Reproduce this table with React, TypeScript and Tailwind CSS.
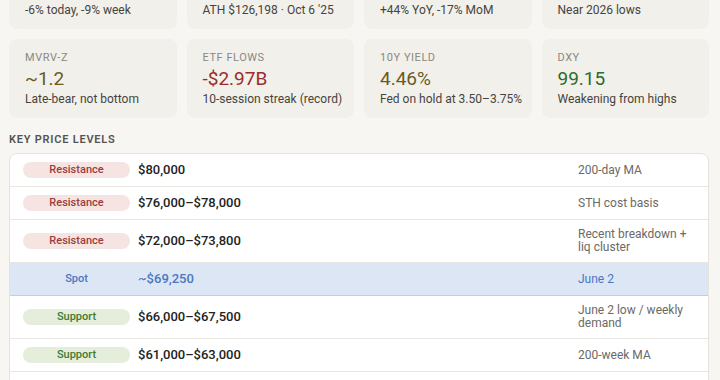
import React from "react";

type Stat = {
  label: string;
  value: string;
  sub: string;
  tone: string;
};

type Level = {
  kind: "Resistance" | "Support" | "Spot";
  price: string;
  note: string;
};

const stats: Stat[] = [
  { label: "BTC PRICE", value: "$69,250", sub: "-6% today, -9% week", tone: "text-[#9b2c2c]" },
  { label: "DRAWDOWN", value: "-45%", sub: "ATH $126,198 · Oct 6 '25", tone: "text-[#9b2c2c]" },
  { label: "STABLECOIN SUPPLY", value: "$251B", sub: "+44% YoY, -17% MoM", tone: "text-[#6b5a1e]" },
  { label: "FEAR & GREED", value: "14", sub: "Near 2026 lows", tone: "text-[#9b2c2c]" },
  { label: "MVRV-Z", value: "~1.2", sub: "Late-bear, not bottom", tone: "text-[#6b5a1e]" },
  { label: "ETF FLOWS", value: "-$2.97B", sub: "10-session streak (record)", tone: "text-[#9b2c2c]" },
  { label: "10Y YIELD", value: "4.46%", sub: "Fed on hold at 3.50–3.75%", tone: "text-[#6b5a1e]" },
  { label: "DXY", value: "99.15", sub: "Weakening from highs", tone: "text-[#2e6b2a]" },
];

const levels: Level[] = [
  { kind: "Resistance", price: "$80,000", note: "200-day MA" },
  { kind: "Resistance", price: "$76,000–$78,000", note: "STH cost basis" },
  { kind: "Resistance", price: "$72,000–$73,800", note: "Recent breakdown + liq cluster" },
  { kind: "Spot", price: "~$69,250", note: "June 2" },
  { kind: "Support", price: "$66,000–$67,500", note: "June 2 low / weekly demand" },
  { kind: "Support", price: "$61,000–$63,000", note: "200-week MA" },
  { kind: "Support", price: "$56,000–$58,000", note: "Realized price" },
];

const StatCard = ({ stat }: { stat: Stat }) => (
  <div className="rounded-[8px] bg-[#f2f0ea] pl-4 pr-3 pt-3 pb-[11px]">
    <div className="text-[11px] leading-[14px] tracking-[0.05em] text-[#8a8883]">{stat.label}</div>
    <div className={`mt-[2px] text-[19px] leading-[24px] ${stat.tone}`}>{stat.value}</div>
    <div className="whitespace-nowrap text-[12px] leading-[16px] text-[#45443f]">{stat.sub}</div>
  </div>
);

const Badge = ({ kind }: { kind: Level["kind"] }) => {
  if (kind === "Spot") {
    return <div className="h-4 text-center text-[11px] font-medium leading-4 text-[#4a78c0]">Spot</div>;
  }
  const tone =
    kind === "Resistance" ? "bg-[#f6e4e3] text-[#9b3d3d]" : "bg-[#e4eedb] text-[#3f7a32]";
  return (
    <div className={`h-4 rounded-full text-center text-[11px] font-medium leading-4 ${tone}`}>{kind}</div>
  );
};

const LevelRow = ({ level, last }: { level: Level; last: boolean }) => {
  const spot = level.kind === "Spot";
  return (
    <div
      className={`grid grid-cols-[107px_1fr_117px] items-center gap-2 pl-[13px] pr-[13px] py-2 ${
        spot ? "bg-[#dce6f4] border-b border-[#bccfe8]" : last ? "" : "border-b border-[#e8e6e1]"
      }`}
    >
      <Badge kind={level.kind} />
      <div className={`text-[13px] font-medium leading-4 ${spot ? "text-[#4a78c0]" : "text-[#222]"}`}>
        {level.price}
      </div>
      <div className={`text-[12px] leading-[13px] ${spot ? "text-[#4a78c0]" : "text-[#6b6a66]"}`}>
        {level.note}
      </div>
    </div>
  );
};

export default function App() {
  return (
    <div
      className="h-[380px] w-[720px] overflow-hidden bg-[#f7f6f3] pl-[9px] pr-[11px]"
      style={{ fontFamily: "Roboto, 'Noto Sans', sans-serif" }}
    >
      <div className="-mt-[50px] grid grid-cols-4 gap-[10px]">
        {stats.map((s) => (
          <StatCard key={s.label} stat={s} />
        ))}
      </div>

      <div className="mt-[15px] text-[11px] font-semibold leading-[14px] tracking-[0.07em] text-[#555450]">
        KEY PRICE LEVELS
      </div>

      <div className="mt-[6px] overflow-hidden rounded-[8px] border border-[#e5e3de] bg-white">
        {levels.map((l, i) => (
          <LevelRow key={l.price} level={l} last={i === levels.length - 1} />
        ))}
      </div>
    </div>
  );
}
